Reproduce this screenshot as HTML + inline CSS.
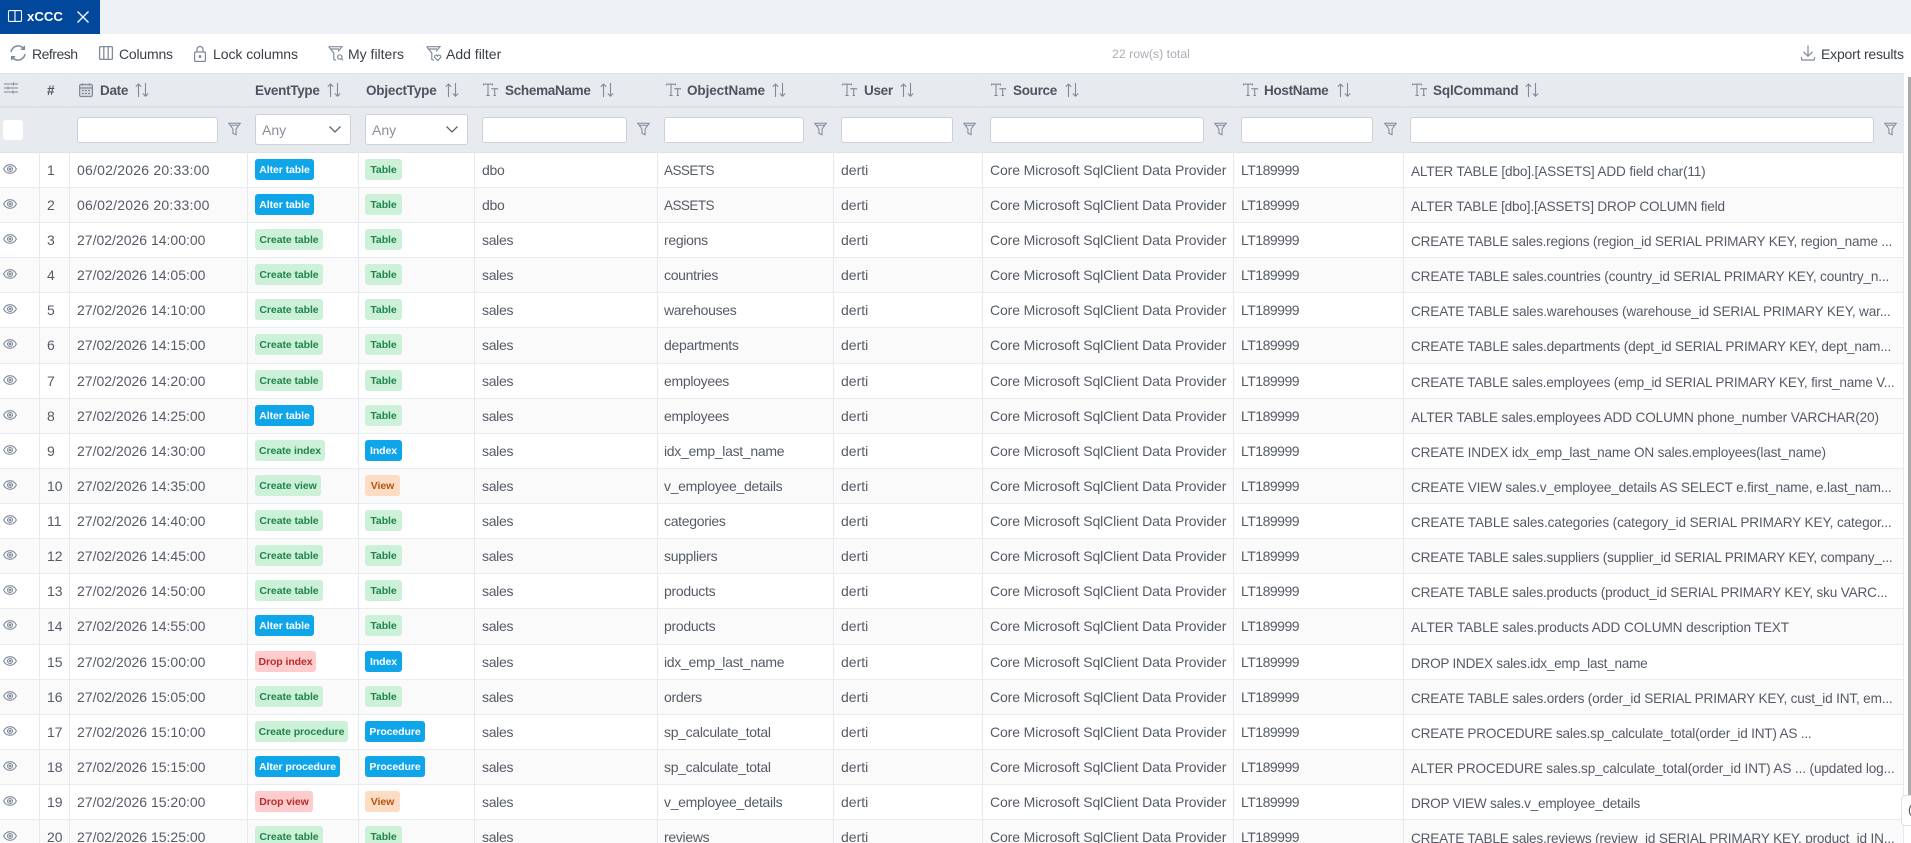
<!DOCTYPE html>
<html><head><meta charset="utf-8"><title>xCCC</title>
<style>
html,body{margin:0;padding:0;width:1911px;height:843px;overflow:hidden;background:#fff}
body{position:relative;font-family:"Liberation Sans",sans-serif;font-size:14px;color:#555b66}
.a{position:absolute}
svg{position:absolute;fill:none;stroke:#7f8b9b;stroke-width:1.1;overflow:visible}
.top{left:0;top:0;width:1911px;height:34px;background:#edf1f5}
.tab{left:0;top:0;width:100px;height:34px;background:#01479c}
.tl{position:absolute;top:45px;line-height:18px;color:#3a3f47;white-space:nowrap;font-size:14px}
.head{left:0;top:73px;width:1903px;height:80px;background:#e7eaee}
.sep{left:0;top:106px;width:1903px;height:2px;background:#dde1e6}
.hb{left:0;top:152px;width:1903px;height:1px;background:#dfe3e8}
.htop{left:0;top:73px;width:1903px;height:1px;background:#dde1e6}
.h{position:absolute;top:82px;line-height:18px;font-weight:bold;color:#4d5461;white-space:nowrap;font-size:13.5px;letter-spacing:-.3px}
.inp{position:absolute;top:117px;height:24px;background:#fff;border:1px solid #ccd1d9;border-radius:3px}
.sel{position:absolute;top:114px;height:29px;background:#fff;border:1px solid #ccd1d9;border-radius:3px;line-height:30px;color:#8a8f98;text-indent:6px;font-size:14px}
.v{position:absolute;top:73px;width:1px;height:770px;background:#e6e9ed}
.r{position:absolute;left:0;width:1903px;height:34px;border-bottom:1px solid #e8ebef;background:#fff}
.r.e{background:#fafafa}
.r span{position:absolute;top:0;line-height:35px;white-space:nowrap}
.r .n{left:47px}.r .d{left:77px}.r .s{left:482px;letter-spacing:-.3px}.r .o{left:664px;letter-spacing:-.3px}.r .u{left:841px}.r .p{left:990px;letter-spacing:-.11px}.r .m{left:1241px;letter-spacing:-.5px}
.r .d.x{letter-spacing:.22px}
.r .o.up{font-size:13.5px;letter-spacing:-.55px}
.r svg:first-child{left:2.5px !important}
.t{left:1411px;top:0}
.t text{fill:#555b66;stroke:none;font-family:"Liberation Sans",sans-serif;font-size:13.6px}
.r b{position:absolute;top:6px;height:21px;line-height:23px;border-radius:3px;font-size:10.5px;letter-spacing:-.08px;font-weight:bold;text-align:center;white-space:nowrap}
.r .ev{left:255px}.r .ob{left:365px}
.bl{background:#0ea5e9;color:#fff}
.gr{background:#cdf0d9;color:#1f8549}
.rd{background:#fecccc;color:#b92c2c}
.or{background:#fddcc4;color:#b4560f}
</style></head><body>
<svg width="0" height="0" style="position:absolute"><defs>
<symbol id="eye" viewBox="0 0 14 14" overflow="visible"><path d="M.6 7C2.2 3.9 4.4 2.7 7 2.7S11.800 3.900 13.400 7C11.800 10.100 9.600 11.300 7 11.300S2.200 10.100 .6 7z"/><circle cx="7" cy="7" r="2.500"/><circle cx="7" cy="7" r=".8"/></symbol>
<symbol id="sort" viewBox="0 0 14 14" overflow="visible"><path d="M3.500 14V1M.8 3.800 3.500 1 6.200 3.800M10.500 0V13.200M7.800 10.500 10.500 13.200 13.200 10.500"/></symbol>
<symbol id="tt" viewBox="0 0 15 14" overflow="visible"><path d="M.5 2.500V1.200H9.500V2.500M5 1.200V12.500M3.300 12.500H6.700M9 6.500V5.700H14.500V6.500M11.700 5.700V12.500M10.500 12.500H13"/></symbol>
<symbol id="fun" viewBox="0 0 14 14" overflow="visible"><path d="M.8 .8H13.200L8.700 7V13.200L5.300 11.600V7zM3 3H11"/></symbol>
</defs></svg>

<div class="a top"></div>
<div class="a tab"></div>
<svg style="left:8px;top:10px;stroke:#fff" width="14" height="12"><path d="M1.500 .6H12.500A1 1 0 0 1 13.500 1.600V10.400A1 1 0 0 1 12.500 11.400H1.500A1 1 0 0 1 .5 10.400V1.600A1 1 0 0 1 1.500 .6zM7 .6V11.400"/></svg>
<div class="a" style="left:27px;top:8px;line-height:17px;color:#fff;font-weight:bold;font-size:13.2px">xCCC</div>
<svg style="left:77px;top:11px;stroke:#fff;stroke-width:1.300" width="12" height="12"><path d="M.5 .5 11.500 11.500M11.500 .5 .5 11.500"/></svg>

<svg style="left:10px;top:45px;stroke-width:1.500" width="16" height="16"><path d="M1 7C1.500 3.500 4.500 .9 8 .9 10.500 .9 12.500 2 14 4M15 9C14.500 12.500 11.500 15.100 8 15.100 5.500 15.100 3.500 14 2 12M14.300 .8V4.300H10.800M1.700 15.200V11.700H5.200"/></svg>
<div class="tl" style="left:32px;letter-spacing:-.5px">Refresh</div>
<svg style="left:99px;top:46px;stroke-width:1.300" width="14" height="14"><rect x=".6" y=".6" width="12.800" height="12.800" rx="1"/><path d="M4.800 .6V13.400M9.200 .6V13.400"/></svg>
<div class="tl" style="left:119px;letter-spacing:-.2px">Columns</div>
<svg style="left:194px;top:46px;stroke-width:1.300" width="12" height="16"><rect x=".6" y="6" width="10.800" height="9.400" rx="1"/><path d="M3 6V3.500A3 3 0 0 1 9 3.500V6"/><circle cx="6" cy="10.500" r=".8"/></svg>
<div class="tl" style="left:213px;letter-spacing:-.05px">Lock columns</div>
<svg style="left:328px;top:46px;stroke-width:1.200" width="16" height="15"><path d="M.7 .7H14L10 5.500M.7 .7 5.800 7V13.300L8 14.400M3 3H11"/><circle cx="11.800" cy="11" r="2.200"/><path d="M13.400 12.600 15 14.200"/></svg>
<div class="tl" style="left:348px">My filters</div>
<svg style="left:426px;top:46px;stroke-width:1.200" width="16" height="15"><path d="M.7 .7H14L10 5.500M.7 .7 5.800 7V13.300L8 14.400M3 3H11"/><path d="M11.700 14.600 8.800 11.500C7.800 9.500 10.600 8.300 11.700 10 12.800 8.300 15.600 9.500 14.600 11.500z"/></svg>
<div class="tl" style="left:446px">Add filter</div>
<div class="a" style="left:1112px;top:45px;line-height:18px;color:#a9aeb5;font-size:12.300px">22 row(s) total</div>
<svg style="left:1801px;top:45px;stroke-width:1.200" width="14" height="16"><path d="M7 .5V11M2.500 6.800 7 11.300 11.500 6.800M.5 12V14A1 1 0 0 0 1.500 15H12.500A1 1 0 0 0 13.500 14V12"/></svg>
<div class="tl" style="left:1821px;letter-spacing:-.2px">Export results</div>

<div class="a head"></div><div class="a htop"></div><div class="a sep"></div><div class="a hb"></div>

<svg style="left:4px;top:82px" width="14" height="12"><path d="M0 2H14M0 6H14M0 10H14"/><path d="M9.500 .5V3.500M4 4.500V7.500M9 8.500V11.500"/></svg>
<div class="h" style="left:47px">#</div>
<svg style="left:79px;top:83px;stroke-width:1.200" width="14" height="14"><rect x=".6" y="1.500" width="12.800" height="12" rx="1.500" fill="#d8dde3"/><path d="M.6 5H13.400M3.500 .2V2.500M10.500 .2V2.500M3 7.500H5M6 7.500H8M9 7.500H11M3 10.500H5M6 10.500H8M9 10.500H11"/></svg>
<div class="h" style="left:100px">Date</div>
<svg style="left:135px;top:83px" width="14" height="14"><use href="#sort"/></svg>
<div class="h" style="left:255px">EventType</div>
<svg style="left:327px;top:83px" width="14" height="14"><use href="#sort"/></svg>
<div class="h" style="left:366px;letter-spacing:-.2px">ObjectType</div>
<svg style="left:445px;top:83px" width="14" height="14"><use href="#sort"/></svg>
<svg style="left:483px;top:83px" width="15" height="14"><use href="#tt"/></svg>
<div class="h" style="left:505px">SchemaName</div>
<svg style="left:600px;top:83px" width="14" height="14"><use href="#sort"/></svg>
<svg style="left:666px;top:83px" width="15" height="14"><use href="#tt"/></svg>
<div class="h" style="left:687px;letter-spacing:-.08px">ObjectName</div>
<svg style="left:772px;top:83px" width="14" height="14"><use href="#sort"/></svg>
<svg style="left:842px;top:83px" width="15" height="14"><use href="#tt"/></svg>
<div class="h" style="left:864px">User</div>
<svg style="left:900px;top:83px" width="14" height="14"><use href="#sort"/></svg>
<svg style="left:991px;top:83px" width="15" height="14"><use href="#tt"/></svg>
<div class="h" style="left:1013px">Source</div>
<svg style="left:1065px;top:83px" width="14" height="14"><use href="#sort"/></svg>
<svg style="left:1243px;top:83px" width="15" height="14"><use href="#tt"/></svg>
<div class="h" style="left:1264px">HostName</div>
<svg style="left:1337px;top:83px" width="14" height="14"><use href="#sort"/></svg>
<svg style="left:1412px;top:83px" width="15" height="14"><use href="#tt"/></svg>
<div class="h" style="left:1433px;letter-spacing:-.15px">SqlCommand</div>
<svg style="left:1525px;top:83px" width="14" height="14"><use href="#sort"/></svg>

<div class="a" style="left:3px;top:120px;width:20px;height:20px;background:#fff;border-radius:3px"></div>
<div class="inp" style="left:77px;width:139px"></div>
<svg style="left:228px;top:122px" width="13" height="14"><use href="#fun"/></svg>
<div class="sel" style="left:255px;width:94px">Any</div>
<svg style="left:329px;top:126px;stroke:#5b6472;stroke-width:1.300" width="12" height="7"><path d="M.5 .5 6 6 11.500 .5"/></svg>
<div class="sel" style="left:365px;width:101px">Any</div>
<svg style="left:446px;top:126px;stroke:#5b6472;stroke-width:1.300" width="12" height="7"><path d="M.5 .5 6 6 11.500 .5"/></svg>
<div class="inp" style="left:482px;width:143px"></div>
<svg style="left:637px;top:122px" width="13" height="14"><use href="#fun"/></svg>
<div class="inp" style="left:664px;width:138px"></div>
<svg style="left:814px;top:122px" width="13" height="14"><use href="#fun"/></svg>
<div class="inp" style="left:841px;width:110px"></div>
<svg style="left:963px;top:122px" width="13" height="14"><use href="#fun"/></svg>
<div class="inp" style="left:990px;width:212px"></div>
<svg style="left:1214px;top:122px" width="13" height="14"><use href="#fun"/></svg>
<div class="inp" style="left:1241px;width:130px"></div>
<svg style="left:1384px;top:122px" width="13" height="14"><use href="#fun"/></svg>
<div class="inp" style="left:1410px;width:462px"></div>
<svg style="left:1884px;top:122px" width="13" height="14"><use href="#fun"/></svg>

<div class="r" style="top:153px"><svg style="left:3px;top:9px" width="14" height="14"><use href="#eye"/></svg><span class="n">1</span><span class="d x">06/02/2026 20:33:00</span><b class="ev bl" style="width:59px">Alter table</b><b class="ob gr" style="width:37px">Table</b><span class="s">dbo</span><span class="o up">ASSETS</span><span class="u">derti</span><span class="p">Core Microsoft SqlClient Data Provider</span><span class="m">LT189999</span><svg class="t" width="490" height="34"><text y="23" textLength="294.7">ALTER TABLE [dbo].[ASSETS] ADD field char(11)</text></svg></div>
<div class="r e" style="top:188px"><svg style="left:3px;top:9px" width="14" height="14"><use href="#eye"/></svg><span class="n">2</span><span class="d x">06/02/2026 20:33:00</span><b class="ev bl" style="width:59px">Alter table</b><b class="ob gr" style="width:37px">Table</b><span class="s">dbo</span><span class="o up">ASSETS</span><span class="u">derti</span><span class="p">Core Microsoft SqlClient Data Provider</span><span class="m">LT189999</span><svg class="t" width="490" height="34"><text y="23" textLength="314">ALTER TABLE [dbo].[ASSETS] DROP COLUMN field</text></svg></div>
<div class="r" style="top:223px"><svg style="left:3px;top:9px" width="14" height="14"><use href="#eye"/></svg><span class="n">3</span><span class="d">27/02/2026 14:00:00</span><b class="ev gr" style="width:68px">Create table</b><b class="ob gr" style="width:37px">Table</b><span class="s">sales</span><span class="o">regions</span><span class="u">derti</span><span class="p">Core Microsoft SqlClient Data Provider</span><span class="m">LT189999</span><svg class="t" width="490" height="34"><text y="23" textLength="481.3">CREATE TABLE sales.regions (region_id SERIAL PRIMARY KEY, region_name ...</text></svg></div>
<div class="r e" style="top:258px"><svg style="left:3px;top:9px" width="14" height="14"><use href="#eye"/></svg><span class="n">4</span><span class="d">27/02/2026 14:05:00</span><b class="ev gr" style="width:68px">Create table</b><b class="ob gr" style="width:37px">Table</b><span class="s">sales</span><span class="o">countries</span><span class="u">derti</span><span class="p">Core Microsoft SqlClient Data Provider</span><span class="m">LT189999</span><svg class="t" width="490" height="34"><text y="23" textLength="478.3">CREATE TABLE sales.countries (country_id SERIAL PRIMARY KEY, country_n...</text></svg></div>
<div class="r" style="top:293px"><svg style="left:3px;top:9px" width="14" height="14"><use href="#eye"/></svg><span class="n">5</span><span class="d">27/02/2026 14:10:00</span><b class="ev gr" style="width:68px">Create table</b><b class="ob gr" style="width:37px">Table</b><span class="s">sales</span><span class="o">warehouses</span><span class="u">derti</span><span class="p">Core Microsoft SqlClient Data Provider</span><span class="m">LT189999</span><svg class="t" width="490" height="34"><text y="23" textLength="479.7">CREATE TABLE sales.warehouses (warehouse_id SERIAL PRIMARY KEY, war...</text></svg></div>
<div class="r e" style="top:328px;height:35px"><svg style="left:3px;top:9px" width="14" height="14"><use href="#eye"/></svg><span class="n">6</span><span class="d">27/02/2026 14:15:00</span><b class="ev gr" style="width:68px">Create table</b><b class="ob gr" style="width:37px">Table</b><span class="s">sales</span><span class="o">departments</span><span class="u">derti</span><span class="p">Core Microsoft SqlClient Data Provider</span><span class="m">LT189999</span><svg class="t" width="490" height="34"><text y="23" textLength="480.3">CREATE TABLE sales.departments (dept_id SERIAL PRIMARY KEY, dept_nam...</text></svg></div>
<div class="r" style="top:364px"><svg style="left:3px;top:9px" width="14" height="14"><use href="#eye"/></svg><span class="n">7</span><span class="d">27/02/2026 14:20:00</span><b class="ev gr" style="width:68px">Create table</b><b class="ob gr" style="width:37px">Table</b><span class="s">sales</span><span class="o">employees</span><span class="u">derti</span><span class="p">Core Microsoft SqlClient Data Provider</span><span class="m">LT189999</span><svg class="t" width="490" height="34"><text y="23" textLength="483.7">CREATE TABLE sales.employees (emp_id SERIAL PRIMARY KEY, first_name V...</text></svg></div>
<div class="r e" style="top:399px"><svg style="left:3px;top:9px" width="14" height="14"><use href="#eye"/></svg><span class="n">8</span><span class="d">27/02/2026 14:25:00</span><b class="ev bl" style="width:59px">Alter table</b><b class="ob gr" style="width:37px">Table</b><span class="s">sales</span><span class="o">employees</span><span class="u">derti</span><span class="p">Core Microsoft SqlClient Data Provider</span><span class="m">LT189999</span><svg class="t" width="490" height="34"><text y="23" textLength="468">ALTER TABLE sales.employees ADD COLUMN phone_number VARCHAR(20)</text></svg></div>
<div class="r" style="top:434px"><svg style="left:3px;top:9px" width="14" height="14"><use href="#eye"/></svg><span class="n">9</span><span class="d">27/02/2026 14:30:00</span><b class="ev gr" style="width:70px">Create index</b><b class="ob bl" style="width:37px">Index</b><span class="s">sales</span><span class="o">idx_emp_last_name</span><span class="u">derti</span><span class="p">Core Microsoft SqlClient Data Provider</span><span class="m">LT189999</span><svg class="t" width="490" height="34"><text y="23" textLength="415">CREATE INDEX idx_emp_last_name ON sales.employees(last_name)</text></svg></div>
<div class="r e" style="top:469px"><svg style="left:3px;top:9px" width="14" height="14"><use href="#eye"/></svg><span class="n">10</span><span class="d">27/02/2026 14:35:00</span><b class="ev gr" style="width:66px">Create view</b><b class="ob or" style="width:35px">View</b><span class="s">sales</span><span class="o">v_employee_details</span><span class="u">derti</span><span class="p">Core Microsoft SqlClient Data Provider</span><span class="m">LT189999</span><svg class="t" width="490" height="34"><text y="23" textLength="480.7">CREATE VIEW sales.v_employee_details AS SELECT e.first_name, e.last_nam...</text></svg></div>
<div class="r" style="top:504px"><svg style="left:3px;top:9px" width="14" height="14"><use href="#eye"/></svg><span class="n">11</span><span class="d">27/02/2026 14:40:00</span><b class="ev gr" style="width:68px">Create table</b><b class="ob gr" style="width:37px">Table</b><span class="s">sales</span><span class="o">categories</span><span class="u">derti</span><span class="p">Core Microsoft SqlClient Data Provider</span><span class="m">LT189999</span><svg class="t" width="490" height="34"><text y="23" textLength="480.7">CREATE TABLE sales.categories (category_id SERIAL PRIMARY KEY, categor...</text></svg></div>
<div class="r e" style="top:539px"><svg style="left:3px;top:9px" width="14" height="14"><use href="#eye"/></svg><span class="n">12</span><span class="d">27/02/2026 14:45:00</span><b class="ev gr" style="width:68px">Create table</b><b class="ob gr" style="width:37px">Table</b><span class="s">sales</span><span class="o">suppliers</span><span class="u">derti</span><span class="p">Core Microsoft SqlClient Data Provider</span><span class="m">LT189999</span><svg class="t" width="490" height="34"><text y="23" textLength="481.7">CREATE TABLE sales.suppliers (supplier_id SERIAL PRIMARY KEY, company_...</text></svg></div>
<div class="r" style="top:574px"><svg style="left:3px;top:9px" width="14" height="14"><use href="#eye"/></svg><span class="n">13</span><span class="d">27/02/2026 14:50:00</span><b class="ev gr" style="width:68px">Create table</b><b class="ob gr" style="width:37px">Table</b><span class="s">sales</span><span class="o">products</span><span class="u">derti</span><span class="p">Core Microsoft SqlClient Data Provider</span><span class="m">LT189999</span><svg class="t" width="490" height="34"><text y="23" textLength="476.7">CREATE TABLE sales.products (product_id SERIAL PRIMARY KEY, sku VARC...</text></svg></div>
<div class="r e" style="top:609px;height:35px"><svg style="left:3px;top:9px" width="14" height="14"><use href="#eye"/></svg><span class="n">14</span><span class="d">27/02/2026 14:55:00</span><b class="ev bl" style="width:59px">Alter table</b><b class="ob gr" style="width:37px">Table</b><span class="s">sales</span><span class="o">products</span><span class="u">derti</span><span class="p">Core Microsoft SqlClient Data Provider</span><span class="m">LT189999</span><svg class="t" width="490" height="34"><text y="23" textLength="378">ALTER TABLE sales.products ADD COLUMN description TEXT</text></svg></div>
<div class="r" style="top:645px"><svg style="left:3px;top:9px" width="14" height="14"><use href="#eye"/></svg><span class="n">15</span><span class="d">27/02/2026 15:00:00</span><b class="ev rd" style="width:61px">Drop index</b><b class="ob bl" style="width:37px">Index</b><span class="s">sales</span><span class="o">idx_emp_last_name</span><span class="u">derti</span><span class="p">Core Microsoft SqlClient Data Provider</span><span class="m">LT189999</span><svg class="t" width="490" height="34"><text y="23" textLength="236.7">DROP INDEX sales.idx_emp_last_name</text></svg></div>
<div class="r e" style="top:680px"><svg style="left:3px;top:9px" width="14" height="14"><use href="#eye"/></svg><span class="n">16</span><span class="d">27/02/2026 15:05:00</span><b class="ev gr" style="width:68px">Create table</b><b class="ob gr" style="width:37px">Table</b><span class="s">sales</span><span class="o">orders</span><span class="u">derti</span><span class="p">Core Microsoft SqlClient Data Provider</span><span class="m">LT189999</span><svg class="t" width="490" height="34"><text y="23" textLength="481.7">CREATE TABLE sales.orders (order_id SERIAL PRIMARY KEY, cust_id INT, em...</text></svg></div>
<div class="r" style="top:715px"><svg style="left:3px;top:9px" width="14" height="14"><use href="#eye"/></svg><span class="n">17</span><span class="d">27/02/2026 15:10:00</span><b class="ev gr" style="width:93px">Create procedure</b><b class="ob bl" style="width:60px">Procedure</b><span class="s">sales</span><span class="o">sp_calculate_total</span><span class="u">derti</span><span class="p">Core Microsoft SqlClient Data Provider</span><span class="m">LT189999</span><svg class="t" width="490" height="34"><text y="23" textLength="400.7">CREATE PROCEDURE sales.sp_calculate_total(order_id INT) AS ...</text></svg></div>
<div class="r e" style="top:750px"><svg style="left:3px;top:9px" width="14" height="14"><use href="#eye"/></svg><span class="n">18</span><span class="d">27/02/2026 15:15:00</span><b class="ev bl" style="width:85px">Alter procedure</b><b class="ob bl" style="width:60px">Procedure</b><span class="s">sales</span><span class="o">sp_calculate_total</span><span class="u">derti</span><span class="p">Core Microsoft SqlClient Data Provider</span><span class="m">LT189999</span><svg class="t" width="490" height="34"><text y="23" textLength="483.7">ALTER PROCEDURE sales.sp_calculate_total(order_id INT) AS ... (updated log...</text></svg></div>
<div class="r" style="top:785px"><svg style="left:3px;top:9px" width="14" height="14"><use href="#eye"/></svg><span class="n">19</span><span class="d">27/02/2026 15:20:00</span><b class="ev rd" style="width:58px">Drop view</b><b class="ob or" style="width:35px">View</b><span class="s">sales</span><span class="o">v_employee_details</span><span class="u">derti</span><span class="p">Core Microsoft SqlClient Data Provider</span><span class="m">LT189999</span><svg class="t" width="490" height="34"><text y="23" textLength="229.3">DROP VIEW sales.v_employee_details</text></svg></div>
<div class="r e" style="top:820px"><svg style="left:3px;top:9px" width="14" height="14"><use href="#eye"/></svg><span class="n">20</span><span class="d">27/02/2026 15:25:00</span><b class="ev gr" style="width:68px">Create table</b><b class="ob gr" style="width:37px">Table</b><span class="s">sales</span><span class="o">reviews</span><span class="u">derti</span><span class="p">Core Microsoft SqlClient Data Provider</span><span class="m">LT189999</span><svg class="t" width="490" height="34"><text y="23" textLength="483.7">CREATE TABLE sales.reviews (review_id SERIAL PRIMARY KEY, product_id IN...</text></svg></div>

<div class="v" style="left:39px"></div><div class="v" style="left:69px"></div><div class="v" style="left:247px"></div><div class="v" style="left:358px"></div><div class="v" style="left:474px"></div><div class="v" style="left:657px"></div><div class="v" style="left:833px"></div><div class="v" style="left:982px"></div><div class="v" style="left:1233px"></div><div class="v" style="left:1403px"></div><div class="v" style="left:1903px"></div>

<div class="a" style="left:1908px;top:77px;width:3px;height:718px;background:#ababab"></div>
<div class="a" style="left:1901px;top:795px;width:14px;height:31px;background:#fff;border:1px solid #dde1e6;border-radius:4px;box-sizing:border-box"></div>
<div class="a" style="left:1908px;top:802px;line-height:16px;font-size:13px;color:#555">(</div>
</body></html>
